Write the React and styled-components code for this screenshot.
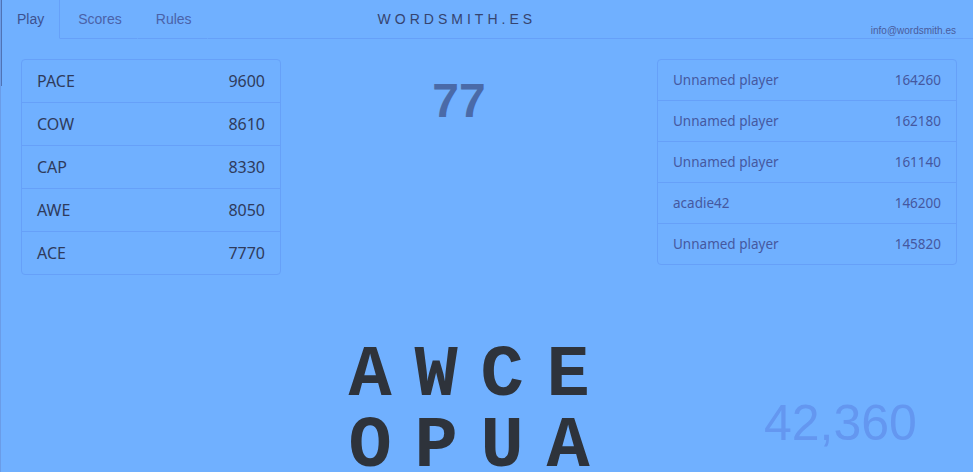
import React from "react";
import styled, { createGlobalStyle } from "styled-components";

const Global = createGlobalStyle`
  html, body { margin: 0; padding: 0; }
  body {
    background: #70b0ff;
    font-family: "Liberation Sans", Arial, sans-serif;
    overflow: hidden;
  }
`;

const Page = styled.div`
  width: 973px;
  height: 472px;
  box-sizing: border-box;
  border-left: 1px solid #6a9ce8;
  background: linear-gradient(#4f73b5, #4f73b5) left top / 1px 86px no-repeat, #70b0ff;
  display: flex;
  flex-direction: column;
  overflow: hidden;
`;

const Header = styled.header`
  display: flex;
  align-items: stretch;
`;

const Tabs = styled.nav`
  display: flex;
  align-items: stretch;
`;

const Tab = styled.div`
  padding: ${(p) => (p.$active ? "0 15px 0 16px" : "0 15px 0 18px")};
  font-size: 14px;
  line-height: 38px;
  color: ${(p) => (p.$active ? "#3d5290" : "#4a62a8")};
  border-right: 1px solid ${(p) => (p.$active ? "#66a0f8" : "transparent")};
  border-bottom: 1px solid ${(p) => (p.$active ? "transparent" : "#66a0f8")};
`;

const Filler = styled.div`
  flex: 1;
  display: flex;
  align-items: flex-start;
  justify-content: space-between;
  border-bottom: 1px solid #66a0f8;
`;

const Title = styled.div`
  margin: 11px 0 0 170px;
  font-size: 14px;
  letter-spacing: 4px;
  color: #36446f;
`;

const Info = styled.div`
  align-self: flex-end;
  margin: 0 17px 2px 0;
  font-size: 10px;
  color: #4a5c9c;
`;

const Main = styled.main`
  display: flex;
  align-items: flex-start;
  padding: 20px 16px 0 20px;
`;

const Card = styled.ul`
  list-style: none;
  margin: 0;
  padding: 0;
  box-sizing: border-box;
  width: ${(p) => p.$w}px;
  border: 1px solid #66a0f8;
  border-radius: 4px;
  font-family: "Noto Sans", "Open Sans", sans-serif;
`;

const Row = styled.li`
  display: flex;
  justify-content: space-between;
  align-items: center;
  height: ${(p) => p.$h}px;
  padding: 0 15px;
  font-size: ${(p) => p.$fs}px;
  color: ${(p) => p.$color};
  & + & { border-top: 1px solid #66a0f8; }
`;

const Center = styled.div`
  flex: 1;
  display: flex;
  justify-content: center;
  padding: 17px 20px 0 0;
`;

const Count = styled.div`
  font-size: 48px;
  font-weight: bold;
  line-height: 50px;
  color: #4a6aa8;
`;

const Bottom = styled.section`
  flex: 1;
  display: flex;
  align-items: flex-start;
  padding-top: 66px;
`;

const Letters = styled.div`
  display: grid;
  grid-template-columns: repeat(4, 66px);
  grid-auto-rows: 71px;
  margin-left: 336px;
`;

const Letter = styled.div`
  font-family: "Liberation Mono", "DejaVu Sans Mono", monospace;
  font-size: 72px;
  font-weight: bold;
  line-height: 71px;
  text-align: center;
  color: #2e333b;
`;

const Total = styled.div`
  margin: 54px 0 0 163px;
  font-size: 50px;
  line-height: 56px;
  color: #6497f0;
`;

const words = [
  ["PACE", 9600],
  ["COW", 8610],
  ["CAP", 8330],
  ["AWE", 8050],
  ["ACE", 7770],
];

const players = [
  ["Unnamed player", 164260],
  ["Unnamed player", 162180],
  ["Unnamed player", 161140],
  ["acadie42", 146200],
  ["Unnamed player", 145820],
];

const letters = ["A", "W", "C", "E", "O", "P", "U", "A"];

export default function App() {
  return (
    <Page>
      <Global />
      <Header>
        <Tabs>
          <Tab $active>Play</Tab>
          <Tab>Scores</Tab>
          <Tab>Rules</Tab>
        </Tabs>
        <Filler>
          <Title>WORDSMITH.ES</Title>
          <Info>info@wordsmith.es</Info>
        </Filler>
      </Header>
      <Main>
        <Card $w={260}>
          {words.map(([w, s]) => (
            <Row key={w} $h={42} $fs={16} $color="#2f3b5c">
              <span>{w}</span>
              <span>{s}</span>
            </Row>
          ))}
        </Card>
        <Center>
          <Count>77</Count>
        </Center>
        <Card $w={300}>
          {players.map(([n, s], i) => (
            <Row key={i} $h={40} $fs={13.5} $color="#4558a0">
              <span>{n}</span>
              <span>{s}</span>
            </Row>
          ))}
        </Card>
      </Main>
      <Bottom>
        <Letters>
          {letters.map((l, i) => (
            <Letter key={i}>{l}</Letter>
          ))}
        </Letters>
        <Total>42,360</Total>
      </Bottom>
    </Page>
  );
}
